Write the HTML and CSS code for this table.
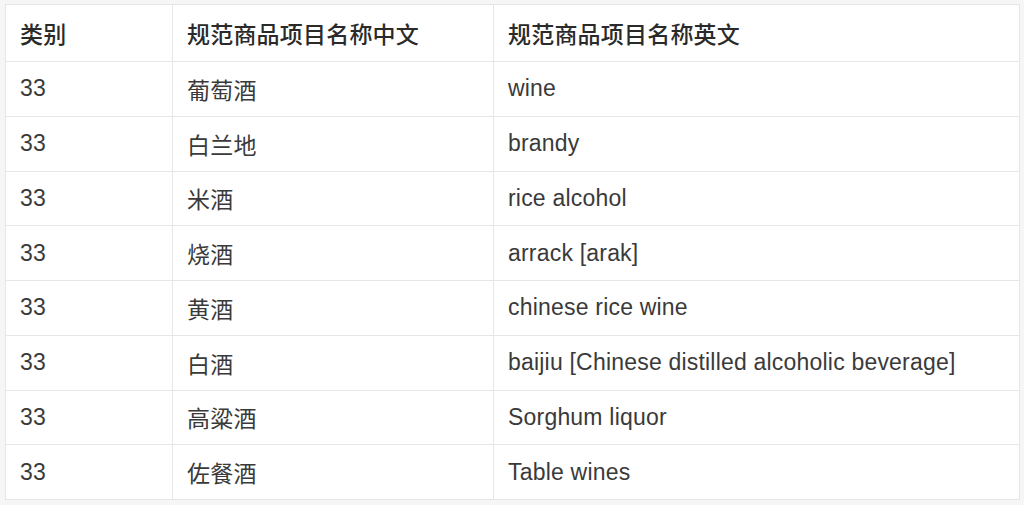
FILE: index.html
```html
<!DOCTYPE html>
<html lang="zh-CN">
<head>
<meta charset="utf-8">
<title>第33类商品</title>
<link rel="stylesheet" href="styles.css">
</head>
<body>
<table class="goods">
  <colgroup>
    <col class="c1"><col class="c2"><col class="c3">
  </colgroup>
  <thead>
    <tr><th>类别</th><th>规范商品项目名称中文</th><th>规范商品项目名称英文</th></tr>
  </thead>
  <tbody>
    <tr><td>33</td><td>葡萄酒</td><td>wine</td></tr>
    <tr><td>33</td><td>白兰地</td><td>brandy</td></tr>
    <tr><td>33</td><td>米酒</td><td>rice alcohol</td></tr>
    <tr><td>33</td><td>烧酒</td><td>arrack [arak]</td></tr>
    <tr><td>33</td><td>黄酒</td><td>chinese rice wine</td></tr>
    <tr><td>33</td><td>白酒</td><td>baijiu [Chinese distilled alcoholic beverage]</td></tr>
    <tr><td>33</td><td>高粱酒</td><td>Sorghum liquor</td></tr>
    <tr><td>33</td><td>佐餐酒</td><td>Table wines</td></tr>
  </tbody>
</table>
</body>
</html>
```
FILE: styles.css
```css
html, body {
  margin: 0;
  background: #f6f6f6;
}
body {
  padding: 4px 5px 0 5px;
  font-family: "Liberation Sans", "Noto Sans CJK SC", sans-serif;
  font-size: 23px;
  letter-spacing: 0.2px;
  color: #3a3a3a;
}
.goods {
  width: 1014px;
  border-collapse: collapse;
  table-layout: fixed;
  background: #fff;
}
.c1 { width: 167px; }
.c2 { width: 321px; }
.c3 { width: 526px; }
.goods th, .goods td {
  border: 1px solid #e6e6e6;
  text-align: left;
  padding: 0 0 0 14px;
  vertical-align: middle;
}
.goods th {
  height: 56px;
  font-weight: 500;
  color: #2a2a2a;
}
.goods td {
  height: 53.75px;
  font-weight: 400;
}
```
